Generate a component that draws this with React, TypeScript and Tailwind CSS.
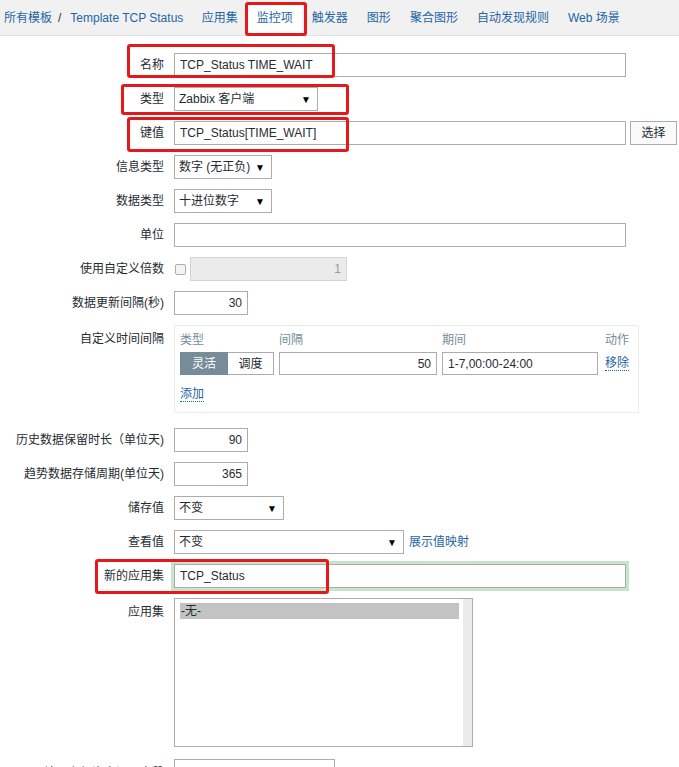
import React from 'react'

const font = "font-['Liberation_Sans','Noto_Sans_CJK_SC',sans-serif]"

function Label({ children, top }: { children: React.ReactNode; top?: boolean }): React.ReactElement {
  return (
    <div className={`w-[164px] shrink-0 text-right text-[12px] text-[#1f2c33] ${top ? 'self-start pt-[5px]' : ''}`}>
      {children}
    </div>
  )
}

function TextBox({ w, value, right }: { w: string; value?: string; right?: boolean }): React.ReactElement {
  return (
    <div
      className={`${w} h-6 border border-[#acacac] bg-white px-[5px] flex items-center text-[12px] text-[#1f2c33] ${right ? 'justify-end' : ''}`}
    >
      {value}
    </div>
  )
}

function Select({ w, value }: { w: string; value: string }): React.ReactElement {
  return (
    <div className={`${w} h-6 border border-[#acacac] bg-white pl-[4px] pr-[6px] flex items-center justify-between text-[12px] text-[#1f2c33]`}>
      <span>{value}</span>
      <span className="text-[10px] text-black">▼</span>
    </div>
  )
}

function Row({ children, className = '' }: { children: React.ReactNode; className?: string }): React.ReactElement {
  return <div className={`flex items-center gap-[10px] ${className}`}>{children}</div>
}

function RedBox({ className }: { className: string }): React.ReactElement {
  return <div className={`absolute border-[3px] border-[#e3191c] rounded-[3px] pointer-events-none ${className}`} />
}

const tabs = ['应用集', '监控项', '触发器', '图形', '聚合图形', '自动发现规则', 'Web 场景']

export default function App(): React.ReactElement {
  return (
    <div className={`relative w-[679px] h-[767px] overflow-hidden bg-white ${font}`}>
      {/* header nav */}
      <div className="h-[36px] bg-[#f1f1f1] border-b border-[#e3e3e3] flex items-center pl-[4px] text-[12px] text-[#1f65a6]">
        <span>所有模板</span>
        <span className="ml-[6px] mr-[9px] text-[#1f2c33]">/</span>
        <span>Template TCP Status</span>
        <div className="flex items-center ml-[9px] h-full">
          {tabs.map((t) => (
            <span
              key={t}
              className={`h-full flex items-center px-[9.5px] ${t === '监控项' ? 'bg-white mt-[4px] pb-[4px]' : ''}`}
            >
              {t}
            </span>
          ))}
        </div>
      </div>

      {/* form */}
      <div className="flex flex-col gap-[10px] pt-[17px]">
        <Row>
          <Label>名称</Label>
          <TextBox w="w-[452px]" value="TCP_Status TIME_WAIT" />
        </Row>
        <Row>
          <Label>类型</Label>
          <Select w="w-[144px]" value="Zabbix 客户端" />
        </Row>
        <Row>
          <Label>键值</Label>
          <TextBox w="w-[452px]" value="TCP_Status[TIME_WAIT]" />
          <div className="-ml-[6px] w-[47px] h-6 border border-[#acacac] bg-[#fafafa] flex items-center justify-center text-[12px] text-[#1f2c33]">
            选择
          </div>
        </Row>
        <Row>
          <Label>信息类型</Label>
          <Select w="w-[98px]" value="数字 (无正负)" />
        </Row>
        <Row>
          <Label>数据类型</Label>
          <Select w="w-[98px]" value="十进位数字" />
        </Row>
        <Row>
          <Label>单位</Label>
          <TextBox w="w-[452px]" />
        </Row>
        <Row>
          <Label>使用自定义倍数</Label>
          <div className="ml-[1px] w-[11px] h-[11px] rounded-[2px] border border-[#acacac] bg-[#f4f4f4]" />
          <div className="-ml-[6px] w-[157px] h-6 border border-[#d4d4d4] bg-[#ebebeb] px-[5px] flex items-center justify-end text-[12px] text-[#9a9a9a]">
            1
          </div>
        </Row>
        <Row>
          <Label>数据更新间隔(秒)</Label>
          <TextBox w="w-[74px]" value="30" right />
        </Row>
        <Row className="mb-[5px]">
          <Label top>自定义时间间隔</Label>
          <div className="w-[465px] h-[88px] border border-[#ebebeb] px-[5px] pt-[5px] flex flex-col text-[12px]">
            <div className="flex h-[18px] items-center text-[#768d99]">
              <span className="w-[99px]">类型</span>
              <span className="w-[163px]">间隔</span>
              <span className="w-[163px]">期间</span>
              <span>动作</span>
            </div>
            <div className="flex items-center mt-[3px] h-[23px]">
              <div className="flex h-full w-[94px]">
                <span className="w-[48px] h-full bg-[#768d99] text-white flex items-center justify-center">灵活</span>
                <span className="w-[46px] h-full border border-[#acacac] border-l-0 text-[#1f2c33] flex items-center justify-center">
                  调度
                </span>
              </div>
              <div className="ml-[5px] w-[158px] h-full border border-[#acacac] px-[5px] flex items-center justify-end text-[#1f2c33]">
                50
              </div>
              <div className="ml-[5px] w-[156px] h-full border border-[#acacac] px-[5px] flex items-center text-[#1f2c33]">
                1-7,00:00-24:00
              </div>
              <span className="ml-[7px] text-[#1f65a6] border-b border-dotted border-[#1f65a6] leading-[14px]">移除</span>
            </div>
            <div className="mt-[10px]">
              <span className="text-[#1f65a6] border-b border-dotted border-[#1f65a6] leading-[14px]">添加</span>
            </div>
          </div>
        </Row>
        <Row>
          <Label>历史数据保留时长（单位天)</Label>
          <TextBox w="w-[74px]" value="90" right />
        </Row>
        <Row>
          <Label>趋势数据存储周期(单位天)</Label>
          <TextBox w="w-[74px]" value="365" right />
        </Row>
        <Row>
          <Label>储存值</Label>
          <Select w="w-[110px]" value="不变" />
        </Row>
        <Row>
          <Label>查看值</Label>
          <Select w="w-[230px]" value="不变" />
          <span className="-ml-[5px] text-[12px] text-[#1f65a6]">展示值映射</span>
        </Row>
        <Row>
          <Label>新的应用集</Label>
          <div className="w-[452px] h-6 border border-[#acacac] ring-[3px] ring-[#c7e4cd] bg-white px-[5px] flex items-center text-[12px] text-[#1f2c33]">
            TCP_Status
          </div>
        </Row>
        <Row>
          <Label top>应用集</Label>
          <div className="w-[299px] h-[149px] border border-[#acacac] bg-white flex">
            <div className="flex-1 pl-[5px] pr-[4px] pt-[4px]">
              <div className="h-[16px] bg-[#c3c3c3] text-[12px] text-[#1f2c33] flex items-center pl-[1px]">-无-</div>
            </div>
            <div className="w-[9px] bg-[#ebebeb]" />
          </div>
        </Row>
        <Row className="mt-[2px]">
          <Label top>填入主机资产记录字段</Label>
          <div className="w-[161px] h-6 border border-[#acacac] bg-white" />
        </Row>
      </div>

      {/* annotation boxes */}
      <RedBox className="left-[245px] top-[2px] w-[62px] h-[34px]" />
      <RedBox className="left-[127px] top-[44px] w-[208px] h-[34px]" />
      <RedBox className="left-[121px] top-[84px] w-[228px] h-[31px]" />
      <RedBox className="left-[127px] top-[117px] w-[222px] h-[35px]" />
      <RedBox className="left-[95px] top-[559px] w-[234px] h-[35px]" />
    </div>
  )
}
